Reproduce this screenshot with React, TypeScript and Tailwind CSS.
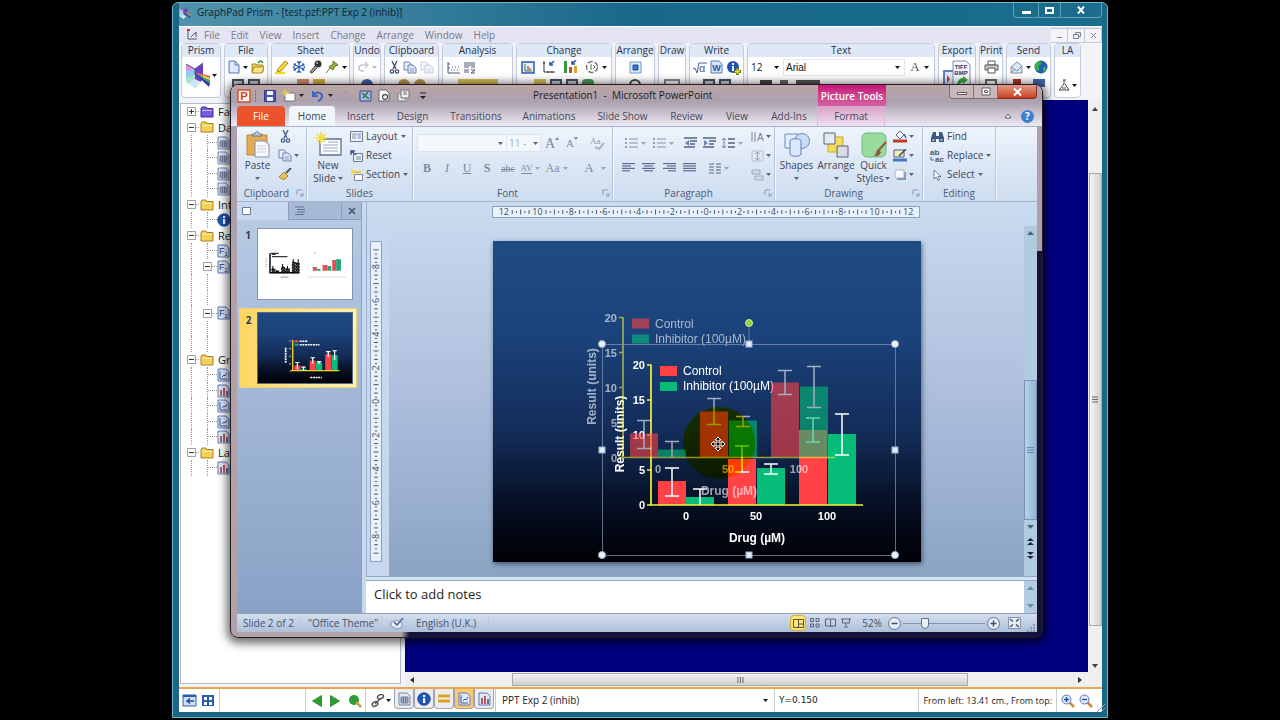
import type { ReactNode } from "react";
import { clsx } from "clsx";

type Bar = { x: number; top: number; series: "control" | "inhibitor"; up: number; down: number };

// Offsets in pixels from the chart origin (where the two axes meet).
const BARS: Bar[] = [
  { x: 7, top: 24, series: "control", up: 37, down: 9 },
  { x: 35, top: 8, series: "inhibitor", up: 16, down: 0 },
  { x: 77, top: 46, series: "control", up: 59, down: 33 },
  { x: 106, top: 37, series: "inhibitor", up: 41, down: 31 },
  { x: 148, top: 75, series: "control", up: 87, down: 63 },
  { x: 177, top: 71, series: "inhibitor", up: 91, down: 50 },
];

const FILL = { control: "#ff4246", inhibitor: "#05bd78" };

const PRISM_MENU = ["File", "Edit", "View", "Insert", "Change", "Arrange", "Window", "Help"];

function Svg({ w, h, children, className }: { w: number; h: number; children: ReactNode; className?: string }) {
  return (
    <svg width={w} height={h} viewBox={`0 0 ${w} ${h}`} fill="none" className={clsx("shrink-0", className)} aria-hidden="true">
      {children}
    </svg>
  );
}

function Caret({ color = "#5b6577" }: { color?: string }) {
  return (
    <Svg w={5} h={3}>
      <path d="M0 0h5L2.5 3z" fill={color} />
    </Svg>
  );
}

function Lines({ rows, color = "#5c6f92" }: { rows: number[][]; color?: string }) {
  return (
    <Svg w={13} h={12}>
      {rows.map(([x, w], i) => (
        <rect key={i} x={x} y={1 + i * 2.4} width={w} height="1.2" fill={color} />
      ))}
    </Svg>
  );
}

/* ---------- Prism icons ---------- */

function PrismLogo({ size }: { size: number }) {
  return (
    <svg width={size} height={size} viewBox="0 0 26 26" aria-hidden="true" className="shrink-0">
      <path d="M1 2l9 5v8L1 17z" fill="#e48fd8" />
      <path d="M1 9l9-2v10l-9 2z" fill="#8fd0f2" />
      <path d="M1 16l9-3v13L1 20z" fill="#a9e3d0" />
      <path d="M10 7l8-6v16l-8 9z" fill="#6a3fc8" />
      <path d="M3 21l7 5 6-6-6-3z" fill="#cfe6f6" />
      <path d="M9 10l16 4v2z" fill="#ef4136" />
      <path d="M9 10l16 6v2z" fill="#f7c52b" />
      <path d="M9 11l16 7v3z" fill="#3fae49" />
      <path d="M9 11l16 10-1 4z" fill="#2c3ea8" />
      <path d="M1 2l9 5 8-6M10 7v6" stroke="#59468f" fill="none" />
    </svg>
  );
}

function PageIcon() {
  return (
    <Svg w={12} h={14}>
      <path d="M1 1h6l4 4v8H1z" fill="#dfe9fa" stroke="#5a76b4" />
      <path d="M7 1v4h4" stroke="#5a76b4" />
    </Svg>
  );
}

function FolderOpen() {
  return (
    <Svg w={14} h={14}>
      <path d="M1 4h4l1 1h6v7H1z" fill="#f0c850" stroke="#a98a1e" />
      <path d="M3 7h10l-2 6H1z" fill="#fbe48b" stroke="#a98a1e" />
      <path d="M7 3c2-3 4-2 5 0" stroke="#3f9b34" strokeWidth="1.6" />
    </Svg>
  );
}

function Folder({ color, edge }: { color: string; edge: string }) {
  return (
    <Svg w={14} h={12}>
      <path d="M1 2.5l1-1.5h4l1 1.5h6V11H1z" fill={color} stroke={edge} />
      <path d="M2 4.5h10" stroke="#fff" opacity=".6" />
    </Svg>
  );
}

function SheetTools() {
  return (
    <>
      <Svg w={14} h={14}>
        <path d="M3 9l7-8 3 2-7 8-4 1z" fill="#f8d838" stroke="#a8841b" />
        <path d="M0 13h10" stroke="#f1d900" strokeWidth="2" />
      </Svg>
      <Svg w={14} h={14}>
        <path d="M7 1v12M1.5 4l11 6M1.5 10l11-6M5 1.5l2 2 2-2M5 12.500l2-2 2 2M1 6.500l2.500-1L3 3M13 7.500l-2.500 1 .5 2.500M1 7.500l2.500 1L3 11M13 6.500l-2.500-1L11 3" stroke="#2c5db5" strokeWidth="1.1" />
      </Svg>
      <Svg w={14} h={14}>
        <circle cx="9" cy="4" r="3.5" fill="#333" />
        <path d="M6 6l-5 6 2 1 5-5" fill="#999" stroke="#444" />
        <circle cx="8" cy="3" r="1" fill="#bbb" />
      </Svg>
      <Svg w={13} h={14}>
        <path d="M7 1l5 4-3 1-2 4-4-3 4-3z" fill="#9db33a" stroke="#5f731a" />
        <path d="M4 8l-4 5" stroke="#666" />
      </Svg>
      <Caret color="#111" />
    </>
  );
}

function CutIcon({ color = "#3c4f78" }: { color?: string }) {
  return (
    <Svg w={11} h={13}>
      <path d="M3 0l4 8M8 0L4 8" stroke={color} strokeWidth="1.4" />
      <circle cx="3" cy="10.5" r="1.7" stroke={color} strokeWidth="1.3" />
      <circle cx="8" cy="10.5" r="1.7" stroke={color} strokeWidth="1.3" />
    </Svg>
  );
}

function CopyIcon({ faded }: { faded?: boolean }) {
  return (
    <Svg w={14} h={13} className={faded ? "opacity-40" : undefined}>
      <path d="M1 1h5l2 2v6H1z" fill="#e8effb" stroke="#6f83b2" />
      <path d="M5 4h5l3 3v5H5z" fill="#dbe6f8" stroke="#6f83b2" />
      <path d="M7 8h4M7 10h4" stroke="#8ea1c8" />
    </Svg>
  );
}

function InfoDot() {
  return (
    <Svg w={14} h={14}>
      <circle cx="7" cy="7" r="6.3" fill="#1f55b5" stroke="#123a86" strokeWidth=".7" />
      <rect x="6" y="6" width="2.2" height="5" fill="#fff" />
      <rect x="6" y="3" width="2.2" height="2" fill="#fff" />
    </Svg>
  );
}

function GridSheet() {
  return (
    <Svg w={13} h={14}>
      <path d="M1 1h8l3 3v9H1z" fill="#e3eaf6" stroke="#7587ad" />
      <path d="M3 5h7v6H3zM3 7h7M3 9h7M5.3 5v6M7.7 5v6" stroke="#4d5e84" strokeWidth=".8" />
    </Svg>
  );
}

function ResultSheet({ n }: { n: number }) {
  return (
    <Svg w={13} h={14}>
      <path d="M1 1h8l3 3v9H1z" fill="#dfe7f5" stroke="#5b78b8" />
      <text x="2" y="10" fontSize="9" fontFamily="Liberation Sans, sans-serif" fill="#22346b">
        F<tspan fontSize="6" dy="2">{n}</tspan>
      </text>
    </Svg>
  );
}

function GraphSheet({ red }: { red?: boolean }) {
  return (
    <Svg w={13} h={14}>
      <path d="M1 1h8l3 3v9H1z" fill="#e3eaf6" stroke="#5b78b8" />
      {red ? (
        <>
          <path d="M4 12V6M7 12V4" stroke="#b6404a" strokeWidth="1.7" />
          <path d="M10 12V7" stroke="#555f70" strokeWidth="1.7" />
        </>
      ) : (
        <path d="M3 3v8h7M5 9l2-2 1 1 2-3" stroke="#3059a8" />
      )}
    </Svg>
  );
}

/* ---------- Prism window ---------- */

function PrismTool({ label, width, children, more }: { label: string; width: string; children?: ReactNode; more?: ReactNode }) {
  return (
    <section className={clsx("flex h-[55px] shrink-0 flex-col overflow-hidden rounded-sm border border-[#c3cad8] bg-white", width)}>
      <h2 className="h-[13px] bg-[#dfe8f6] text-center text-[10px] leading-[12px] whitespace-nowrap text-[#26324f]">{label}</h2>
      <div className="flex h-[20px] items-center justify-center gap-[3px]">{children}</div>
      <div className="flex justify-center gap-1 pt-[2px]">{more}</div>
    </section>
  );
}

function DarkBits() {
  return (
    <>
      <span className="h-3 w-3 border-2 border-[#4b4f5e] bg-[#c9cdd8]" />
      <span className="h-3 w-3 border-2 border-[#4b4f5e] bg-[#c9cdd8]" />
    </>
  );
}

function PrismRibbon() {
  return (
    <div className="flex h-[56px] shrink-0 gap-[3px] bg-[#f3f4f9] pr-[21px] pl-[2px]">
      <section className="flex h-[55px] w-[40px] flex-col rounded-sm border border-[#c3cad8] bg-white">
        <h2 className="h-[13px] bg-[#dfe8f6] text-center text-[10px] leading-[12px] text-[#26324f]">Prism</h2>
        <button type="button" aria-label="Prism menu" className="flex flex-1 items-center justify-center gap-px pb-1">
          <PrismLogo size={26} />
          <Caret color="#111" />
        </button>
      </section>
      <PrismTool label="File" width="w-[44px]" more={<DarkBits />}>
        <PageIcon />
        <Caret color="#111" />
        <FolderOpen />
      </PrismTool>
      <PrismTool label="Sheet" width="w-[79px]" more={<><span className="h-2 w-3 bg-[#d98c6a]" /><span className="h-2 w-3 bg-[#d8b040]" /></>}>
        <SheetTools />
      </PrismTool>
      <PrismTool label="Undo" width="w-[28px]" more={<span className="h-3 w-3 rounded-full bg-[#3c5fa8]" />}>
        <Svg w={12} h={12}>
          <path d="M11 4H5a3 3 0 000 6h2M8 1l3 3-3 3" stroke="#c2c8d2" strokeWidth="1.5" />
        </Svg>
        <Caret color="#b5bac4" />
      </PrismTool>
      <PrismTool label="Clipboard" width="w-[55px]" more={<><span className="h-3 w-3 rounded-full bg-[#b9924c]" /><span className="h-3 w-3 rounded-full bg-[#b9924c]" /></>}>
        <CutIcon />
        <CopyIcon />
        <CopyIcon faded />
      </PrismTool>
      <PrismTool label="Analysis" width="w-[71px]" more={<span className="h-2 w-10 bg-[#d8c25a]" />}>
        <div className="flex w-full gap-[3px] pl-1">
          <Svg w={13} h={13}>
            <path d="M1 1v11h12M1 3h2M1 7h2" stroke="#4b5875" />
            <path d="M4 9h8M5 6h7" stroke="#4b5875" strokeDasharray="1 2" />
          </Svg>
          <Svg w={13} h={13}>
            <path d="M1 2h11M1 4h11M1 6h5M8 6h4M1 9h5M1 11h5M8 9h4l-4 3h4" stroke="#4b5875" />
          </Svg>
        </div>
      </PrismTool>
      <PrismTool label="Change" width="w-[96px]" more={<><span className="h-2 w-3 bg-[#d8c25a]" /><DarkBits /><span className="h-2 w-3 rounded-full bg-[#4d9c4f]" /></>}>
        <div className="flex items-center gap-[7px]">
          <Svg w={14} h={13}>
            <path d="M1 1h12v11H1z" fill="#e6f0fc" stroke="#2956b3" strokeWidth="1.5" />
            <path d="M4 3v7h7" stroke="#356f35" />
            <path d="M7 9V5M9 9V7" stroke="#b23c2c" strokeWidth="1.2" />
          </Svg>
          <Svg w={14} h={14}>
            <path d="M2 1v11h11M1 3h2M6 11v2M10 11v2" stroke="#333" />
            <path d="M12 1L8 5M8 2v3h3" stroke="#3156ae" strokeWidth="1.6" />
          </Svg>
          <Svg w={15} h={14}>
            <path d="M1 1h3v12H1z" fill="#2f9b40" />
            <path d="M6 7h3v6H6z" fill="#cf4538" />
            <path d="M11 6h3v7h-3z" fill="#d9a537" />
            <path d="M13 0L9 4M9 1v3h3" stroke="#3156ae" strokeWidth="1.6" />
          </Svg>
          <Svg w={14} h={14}>
            <circle cx="7" cy="7" r="5.5" stroke="#6b7585" strokeWidth="1.5" strokeDasharray="5 2" />
            <path d="M6 4v6M8 5l2 2-2 2" stroke="#557a3b" />
          </Svg>
        </div>
        <Caret color="#111" />
      </PrismTool>
      <PrismTool label="Arrange" width="w-[40px]" more={<span className="h-3 w-3 rounded-full border-2 border-[#444]" />}>
        <Svg w={13} h={13}>
          <path d="M1 1h11v11H1z" fill="#dcebfb" stroke="#6b99d8" />
          <path d="M4 4h5v5H4z" fill="#3d7bc8" stroke="#1d4d92" />
        </Svg>
      </PrismTool>
      <PrismTool label="Draw" width="w-[28px]" more={<span className="h-3 w-4 border-2 border-[#888]" />} />
      <PrismTool label="Write" width="w-[55px]" more={<DarkBits />}>
        <Svg w={14} h={13}>
          <path d="M0 8l2-1 2 5L6 2h8" stroke="#4a5f96" />
          <text x="6" y="11" fontSize="11" fontFamily="Liberation Sans, sans-serif" fill="#4a5f96">α</text>
        </Svg>
        <Svg w={13} h={14}>
          <path d="M1 1h8l3 3v9H1z" fill="#d8e4f8" stroke="#5b78b8" />
          <text x="6.500" y="11" fontSize="9" fontWeight="700" textAnchor="middle" fontFamily="Liberation Sans, sans-serif" fill="#2c50a8">W</text>
        </Svg>
        <Svg w={15} h={15}>
          <circle cx="7" cy="7" r="6" fill="#1f55b5" />
          <path d="M6 6h2v5H6zM6 3h2v2H6z" fill="#fff" />
          <path d="M11.500 8v7M8 11.500h7" stroke="#6a7a1c" strokeWidth="3" />
          <path d="M11.500 9v5M9 11.500h5" stroke="#e3e22c" strokeWidth="1.500" />
        </Svg>
      </PrismTool>
      <section className="flex h-[55px] min-w-0 flex-1 flex-col overflow-hidden rounded-sm border border-[#c3cad8] bg-white">
        <h2 className="h-[13px] bg-[#dfe8f6] text-center text-[10px] leading-[12px] text-[#26324f]">Text</h2>
        <div className="flex h-[20px] items-center text-[10px] text-[#111]">
          <label className="relative flex w-[35px] items-center">
            <select aria-label="Font size" className="w-full appearance-none bg-transparent pl-[3px]" defaultValue="12">
              <option>12</option>
            </select>
            <span className="absolute right-1"><Caret color="#111" /></span>
          </label>
          <label className="relative flex flex-1 items-center border border-[#e3e6ee]">
            <select aria-label="Font family" className="w-full appearance-none bg-transparent pl-[2px] font-['Liberation_Sans',sans-serif]" defaultValue="Arial">
              <option>Arial</option>
            </select>
            <span className="absolute right-1"><Caret color="#111" /></span>
          </label>
          <button type="button" className="flex w-[29px] items-center justify-center gap-1 font-['Liberation_Serif',serif] text-[13px] leading-4 text-[#555]">
            A
            <Caret color="#111" />
          </button>
        </div>
        <div className="flex gap-2 pt-[3px] pl-3">
          <span className="h-2 w-3 bg-[#444]" />
          <span className="h-2 w-2 bg-[#666]" />
          <span className="h-2 w-6 bg-[#555]" />
        </div>
      </section>
      <section className="flex h-[55px] w-[38px] shrink-0 flex-col items-center overflow-hidden rounded-sm border border-[#c3cad8] bg-white">
        <h2 className="h-[13px] w-full bg-[#dfe8f6] text-center text-[10px] leading-[12px] text-[#26324f]">Export</h2>
        <Svg w={28} h={30}>
          <path d="M1 14h12v14H1z" fill="#dfe8fa" stroke="#3c57a8" strokeWidth="1.5" />
          <path d="M4 18l3 4-3 4z" fill="#c33" />
          <path d="M10 4h13l4 4v21H10z" fill="#f4f7fd" stroke="#7c8cae" />
          <g fontSize="6" fontWeight="700" fontFamily="Liberation Sans, sans-serif" textAnchor="middle" fill="#26356b">
            <text x="18" y="12">TIFF</text>
            <text x="18" y="18">BMP</text>
          </g>
          <path d="M14 28c1-7 5-7 6-7v-2l5 4-5 4v-2z" fill="#3aa33c" />
        </Svg>
      </section>
      <PrismTool label="Print" width="w-[24px]" more={<span className="h-2 w-3 border-2 border-[#666]" />}>
        <Svg w={15} h={14}>
          <path d="M4 1h7v4H4z" fill="#fff" stroke="#555" />
          <path d="M1 5h13v5H1z" fill="#c9cbd0" stroke="#555" />
          <path d="M4 8h7v5H4z" fill="#fff" stroke="#555" />
        </Svg>
      </PrismTool>
      <PrismTool label="Send" width="w-[45px]" more={<><span className="h-2 w-2 bg-[#a33]" /><span className="ml-2 h-2 w-3 bg-[#46a]" /></>}>
        <Svg w={13} h={13}>
          <path d="M1 6l6-5 5 4v7H1z" fill="#dce7f4" stroke="#7d90ac" />
          <path d="M1 6l6 4 5-5M1 12l4-4" stroke="#7d90ac" />
        </Svg>
        <Caret color="#111" />
        <Svg w={14} h={14}>
          <circle cx="7" cy="7" r="6.5" fill="#1f5fb4" />
          <path d="M3 2c3-2 5 0 4 2s-3 2-2 4-1 4-3 2-1-7 1-8zM9 7c2-1 4 0 3 3s-3 2-3 0z" fill="#3eae49" />
        </Svg>
      </PrismTool>
      <section className="flex h-[55px] w-[27px] shrink-0 flex-col rounded-sm border border-[#c3cad8] bg-white">
        <h2 className="h-[13px] bg-[#dfe8f6] text-center text-[10px] leading-[12px] text-[#26324f]">LA</h2>
        <button type="button" aria-label="LabArchives" className="mt-[22px] flex items-center justify-center gap-[2px]">
          <Svg w={12} h={12}>
            <path d="M5 1h3M6 1v4L1 11h10L7 5" stroke="#444" />
            <path d="M4 9h4" stroke="#444" />
          </Svg>
          <Caret color="#111" />
        </button>
      </section>
    </div>
  );
}

type TreeRow = { kind: "folder" | "leaf" | "branch" | "gap"; label?: string; icon?: ReactNode };

const yellow = <Folder color="#f6cf55" edge="#a8802a" />;

const TREE: TreeRow[] = [
  { kind: "folder", label: "Fa", icon: <Folder color="#7b5be0" edge="#3d278f" /> },
  { kind: "folder", label: "Da", icon: yellow },
  { kind: "leaf", icon: <GridSheet /> },
  { kind: "leaf", icon: <GridSheet /> },
  { kind: "leaf", icon: <GridSheet /> },
  { kind: "leaf", icon: <GridSheet /> },
  { kind: "folder", label: "Inf", icon: yellow },
  { kind: "leaf", icon: <InfoDot /> },
  { kind: "folder", label: "Re", icon: yellow },
  { kind: "leaf", icon: <ResultSheet n={1} /> },
  { kind: "branch", icon: <ResultSheet n={2} /> },
  { kind: "gap" },
  { kind: "gap" },
  { kind: "branch", icon: <ResultSheet n={2} /> },
  { kind: "gap" },
  { kind: "gap" },
  { kind: "folder", label: "Gr", icon: yellow },
  { kind: "leaf", icon: <GraphSheet /> },
  { kind: "leaf", icon: <GraphSheet red /> },
  { kind: "leaf", icon: <GraphSheet /> },
  { kind: "leaf", icon: <GraphSheet /> },
  { kind: "leaf", icon: <GraphSheet red /> },
  { kind: "folder", label: "La", icon: yellow },
  { kind: "leaf", icon: <GraphSheet red /> },
];

function Expander({ open }: { open: boolean }) {
  return (
    <Svg w={9} h={9}>
      <path d="M.5.5h8v8h-8z" fill="#fff" stroke="#9aa1ae" />
      <path d={open ? "M2 4.5h5" : "M2 4.5h5M4.5 2v5"} stroke="#333" />
    </Svg>
  );
}

function Tree() {
  return (
    <ul className="pl-[6px]">
      {TREE.map((row, i) => (
        <li key={i} className="flex items-center text-[11px] leading-none text-[#222] odd:h-[15px] even:h-4">
          {row.kind === "folder" && (
            <>
              <Expander open={i > 0} />
              <span className="mr-px w-[3px] border-t border-dotted border-[#999]" />
              {row.icon}
              <span className="pl-[4px]">{row.label}</span>
            </>
          )}
          {row.kind === "leaf" && (
            <>
              <span className="ml-1 h-full w-4 border-l border-dotted border-[#999]" />
              <span className="h-full w-[10px] border-l border-dotted border-[#999]">
                <span className="block h-1/2 border-b border-dotted border-[#999]" />
              </span>
              {row.icon}
            </>
          )}
          {row.kind === "branch" && (
            <>
              <span className="ml-1 h-full w-3 border-l border-dotted border-[#999]" />
              <Expander open />
              <span className="w-[5px] border-t border-dotted border-[#999]" />
              {row.icon}
            </>
          )}
          {row.kind === "gap" && (
            <>
              <span className="ml-1 h-full w-4 border-l border-dotted border-[#999]" />
              <span className="h-full w-4 border-l border-dotted border-[#999]" />
            </>
          )}
        </li>
      ))}
    </ul>
  );
}

function PrismStatus() {
  return (
    <footer className="flex h-[25px] shrink-0 items-center border-t-2 border-[#e9a850] bg-white text-[10px] text-[#222]">
      <div className="flex h-full w-[41px] items-center gap-1 border-r border-[#c8ccd4] pl-[3px]">
        <Svg w={15} h={13}>
          <path d="M1 1h13v11H1z" fill="#cfe0f8" stroke="#2a5ea8" />
          <path d="M1 2h13" stroke="#2a5ea8" strokeWidth="2" />
          <path d="M5 7h7M8 4.500L5 7l3 2.500" stroke="#1d4f9b" strokeWidth="1.5" />
        </Svg>
        <Svg w={14} h={13}>
          <path d="M1 1h12v11H1z" fill="#2a5ea8" />
          <path d="M3 3h3v3H3zM8 3h3v3H8zM3 8h3v3H3zM8 8h3v3H8z" fill="#fff" />
        </Svg>
      </div>
      <div className="h-full w-[86px] border-r border-[#c8ccd4]" />
      <div className="flex h-full w-[60px] items-center gap-2 border-r border-[#c8ccd4] pl-[6px]">
        <button type="button" aria-label="Previous sheet">
          <Svg w={10} h={12}><path d="M9.5.5v11L.5 6z" fill="#2ea02e" stroke="#17701a" strokeWidth=".7" /></Svg>
        </button>
        <button type="button" aria-label="Next sheet">
          <Svg w={10} h={12}><path d="M.5.5v11L9.5 6z" fill="#2ea02e" stroke="#17701a" strokeWidth=".7" /></Svg>
        </button>
        <button type="button" aria-label="Find sheet">
          <Svg w={14} h={14}>
            <circle cx="6" cy="6" r="5" fill="#2f9d2f" />
            <path d="M8 8l5 5" stroke="#c0a040" strokeWidth="2.5" />
          </Svg>
        </button>
      </div>
      <div className="flex h-full w-[27px] items-center gap-px pl-[5px]">
        <Svg w={14} h={14}>
          <rect x="6.5" y="1" width="6" height="4" rx="2" transform="rotate(-25 9 3)" stroke="#555" strokeWidth="1.5" />
          <rect x="1" y="8" width="6" height="4" rx="2" transform="rotate(-25 4 10)" stroke="#555" strokeWidth="1.5" />
          <path d="M4 10l6-6" stroke="#555" strokeWidth="1.4" />
        </Svg>
        <Caret color="#111" />
      </div>
      <div className="mx-px flex h-full items-start">
        {[<GridSheet key="g" />, <InfoDot key="i" />, null, <GraphSheet key="c" />, <GraphSheet key="l" red />].map((icon, i) => (
          <button
            type="button"
            key={i}
            aria-label={["Data", "Info", "Results", "Graphs", "Layouts"][i]}
            className={clsx(
              "flex h-5 w-5 items-center justify-center rounded-b border border-t-0 border-[#9da3b0]",
              i === 3 ? "bg-[#fbc873]" : "bg-[#ececf2]",
            )}
          >
            {icon ?? <Svg w={12} h={10}><path d="M0 2h12M0 7h12" stroke="#d9a520" strokeWidth="3" /></Svg>}
          </button>
        ))}
      </div>
      <label className="relative flex h-full w-[280px] items-center border-x border-[#c8ccd4]">
        <select aria-label="Sheet" className="w-full appearance-none bg-transparent pl-[6px]" defaultValue="PPT Exp 2 (inhib)">
          <option>PPT Exp 2 (inhib)</option>
        </select>
        <span className="absolute right-[6px]"><Caret color="#111" /></span>
      </label>
      <p className="flex-1 pl-[4px] font-['DejaVu_Sans',sans-serif] text-[9px]">Y=0.150</p>
      <p className="flex h-full items-center border-x border-[#c8ccd4] px-1 text-[9px] whitespace-nowrap">From left: 13.41 cm., From top:</p>
      <div className="flex h-full w-[45px] items-center gap-1 pl-1">
        {["M3 5.5h5M5.5 3v5", "M3 5.5h5"].map((d) => (
          <Svg w={14} h={14} key={d}>
            <path d="M8 8l5 5" stroke="#c98b3a" strokeWidth="2.5" />
            <circle cx="5.5" cy="5.5" r="4.5" fill="#dfeafa" stroke="#5a7cb8" />
            <path d={d} stroke="#234c9c" strokeWidth="1.3" />
          </Svg>
        ))}
        <Svg w={8} h={10} className="self-end"><path d="M0 10l8-8M4 10l4-4" stroke="#9aa6b8" /></Svg>
      </div>
    </footer>
  );
}

/* ---------- PowerPoint ribbon ---------- */

function Group({ label, width, launcher, children }: { label: string; width: string; launcher?: boolean; children: ReactNode }) {
  return (
    <section className={clsx("flex flex-col border-r border-[#b3c3d9] shadow-[1px_0_0_#f4f8fd]", width)}>
      <div className="flex h-[58px]">{children}</div>
      <div className="flex h-[15px] items-center">
        <h2 className="flex-1 text-center text-[10px] leading-none text-[#4d5b74]">{label}</h2>
        {launcher && <Svg w={10} h={8}><path d="M1 6V1h5M4 4l3 3M7 4v3H4" stroke="#8f9db5" /></Svg>}
      </div>
    </section>
  );
}

function BigButton({ icon, top, bottom, width }: { icon: ReactNode; top: string; bottom?: string; width: string }) {
  return (
    <button type="button" className={clsx("flex flex-col items-center pt-[3px] text-[10px] leading-[13px] text-[#3b4558]", width)}>
      <span className="flex h-[29px] items-center">{icon}</span>
      <span className="whitespace-nowrap">{top}</span>
      <span className="flex h-[13px] items-center gap-[2px] whitespace-nowrap">
        {bottom}
        <Caret />
      </span>
    </button>
  );
}

function RowButton({ icon, label, caret }: { icon: ReactNode; label?: string; caret?: boolean }) {
  return (
    <button
      type="button"
      aria-label={label ?? "Option"}
      className={clsx("flex h-[19px] items-center text-[10px] whitespace-nowrap text-[#3b4558]", label ? "gap-[3px]" : "gap-[2px]")}
    >
      <span className="flex w-[14px] justify-center">{icon}</span>
      {label}
      {caret && <Caret />}
    </button>
  );
}

function Slot({ width = "w-[20px]", children }: { width?: string; children: ReactNode }) {
  return (
    <button type="button" className={clsx("flex h-[18px] items-center justify-center gap-[3px] font-['Liberation_Serif',serif] text-[#7d889c]", width)}>
      {children}
    </button>
  );
}

function Sep() {
  return <span className="h-[14px] w-px bg-[#bccbdf]" />;
}

function Ribbon() {
  return (
    <div className="flex h-[76px] shrink-0 border-y border-[#a5b4cb] bg-linear-to-b from-[#eef4fc] via-[#dce7f5] to-[#cddcf0]">
      <Group label="Clipboard" width="w-[70px]" launcher>
        <BigButton
          width="w-[41px]"
          top="Paste"
          icon={
            <Svg w={24} h={27}>
              <path d="M1 4h20v20H1z" fill="#e3ac55" stroke="#c0872f" />
              <path d="M6 5V3h3c0-3 4-3 4 0h3v2z" fill="#c9ccd3" stroke="#6d7482" />
              <path d="M9 10h10l4 4v12H9z" fill="#f7faff" stroke="#8190ad" />
              <path d="M11 15h9M11 18h9M11 21h9" stroke="#c0cbe0" />
            </Svg>
          }
        />
        <div className="flex flex-col">
          <RowButton icon={<CutIcon color="#48608f" />} />
          <RowButton icon={<CopyIcon />} caret />
          <RowButton
            icon={
              <Svg w={14} h={13}>
                <path d="M13 0L8 5" stroke="#555" strokeWidth="2" />
                <path d="M6 4l4 4-4 4-5-3z" fill="#e8c15a" stroke="#b08826" />
              </Svg>
            }
          />
        </div>
      </Group>
      <Group label="Slides" width="w-[106px]">
        <BigButton
          width="w-[42px]"
          top="New"
          bottom="Slide"
          icon={
            <Svg w={27} h={26}>
              <path d="M5 7h21v16H5z" fill="#fbfcff" stroke="#5f6f8d" strokeWidth="1.3" />
              <path d="M8 13h15M8 16h15M8 19h15M13 10h10" stroke="#9fabc2" />
              <path d="M6 0v12M0 6h12M2 2l8 8M10 2l-8 8" stroke="#f5dd3c" strokeWidth="1.7" />
            </Svg>
          }
        />
        <div className="flex flex-col">
          <RowButton
            label="Layout"
            caret
            icon={
              <Svg w={13} h={11}>
                <path d="M.5.5h12v10H.5z" fill="#f3f6fc" stroke="#6c7a94" />
                <path d="M2 3h9M2 5h4M2 7h4M7.5 5H11M7.5 7H11" stroke="#7f8ca5" />
              </Svg>
            }
          />
          <RowButton
            label="Reset"
            icon={
              <Svg w={13} h={12}>
                <path d="M3.5 3.5h9v8h-9z" fill="#e8eefa" stroke="#6c7a94" />
                <path d="M1 5V1h4M1 1l5 4" stroke="#3d4f9c" strokeWidth="1.4" />
                <path d="M6 7h5M6 9h5" stroke="#7f8ca5" />
              </Svg>
            }
          />
          <RowButton
            label="Section"
            caret
            icon={
              <Svg w={13} h={12}>
                <path d="M4.5 5.5h8v6h-8z" fill="#f8faff" stroke="#7a879f" />
                <path d="M2 3h9" stroke="#eec83c" strokeWidth="2" />
                <path d="M2 0v6" stroke="#f3d94f" strokeWidth="1.5" />
              </Svg>
            }
          />
        </div>
      </Group>
      <Group label="Font" width="w-[200px]" launcher>
        <div className="flex flex-col gap-[7px] pt-[7px] pl-1">
          <div className="flex h-[18px] items-center">
            <label className="relative flex h-full w-[90px] items-center border border-[#dbe4f1] bg-[#f4f8fd]">
              <select aria-label="Font" className="h-full w-full appearance-none text-[10px]" />
              <span className="absolute right-[3px]"><Caret /></span>
            </label>
            <label className="relative flex h-full w-[34px] items-center border border-l-0 border-[#dbe4f1] bg-[#f4f8fd]">
              <select aria-label="Font size" defaultValue="11 -" className="h-full w-full appearance-none pl-[2px] text-[10px] text-[#a2abba]">
                <option>11 -</option>
              </select>
              <span className="absolute right-[2px]"><Caret /></span>
            </label>
            <Slot width="w-[22px]"><span className="text-[14px]">A</span><Svg w={4} h={12} className="-ml-[3px]"><path d="M0 3l2-3 2 3z" fill="#7d889c" /></Svg></Slot>
            <Slot width="w-[18px]"><span className="text-[11px]">A</span><Svg w={4} h={12} className="-ml-[3px]"><path d="M0 0h4L2 3z" fill="#7d889c" /></Svg></Slot>
            <span className="px-[3px]"><Sep /></span>
            <Slot>
              <Svg w={15} h={14}>
                <text x="0" y="8" fontSize="9" fontFamily="Liberation Serif, serif" fill="#8d98ab">Aa</text>
                <path d="M5 11l4 2 5-6" stroke="#a9b3c6" strokeWidth="2" />
              </Svg>
            </Slot>
          </div>
          <div className="flex h-[18px] items-center text-[12px]">
            <Slot><b>B</b></Slot>
            <Slot><i>I</i></Slot>
            <Slot><u>U</u></Slot>
            <Slot><b>S</b></Slot>
            <Slot width="w-[22px]"><s className="text-[10px]">abc</s></Slot>
            <Slot width="w-[23px]">
              <span className="border-b border-[#7d889c] text-[9px] leading-[10px]">AV</span>
              <Caret color="#9aa5b8" />
            </Slot>
            <Slot width="w-[29px]">Aa<Caret color="#9aa5b8" /></Slot>
            <span className="px-[4px]"><Sep /></span>
            <Slot width="w-[32px]"><span className="text-[13px]">A</span><span className="pl-1"><Caret color="#9aa5b8" /></span></Slot>
          </div>
        </div>
      </Group>
      <Group label="Paragraph" width="w-[162px]" launcher>
        <div className="flex w-[137px] flex-col gap-[7px] pt-[7px] pl-2">
          <div className="flex h-[18px] items-center">
            {[0, 1].map((i) => (
              <Slot key={i} width="w-[28px]">
                <Svg w={13} h={12}>
                  <path d="M4 2h9M4 6h9M4 10h9" stroke="#8592aa" />
                  <path d={i ? "M1 1v2M1 5v2M1 9v2" : "M0 2h2M0 6h2M0 10h2"} stroke="#6d83b5" strokeWidth="1.5" />
                </Svg>
                <Caret color="#9aa5b8" />
              </Slot>
            ))}
            <span className="px-[2px]"><Sep /></span>
            {["M1 6l4-3v6z", "M5 6L1 3v6z"].map((d) => (
              <Slot key={d} width="w-[19px]">
                <Svg w={13} h={12}>
                  <path d="M0 1h13M6 4h7M6 7h5M0 10h11" stroke="#56647f" strokeWidth="1.3" />
                  <path d={d} fill="#6d83b5" />
                </Svg>
              </Slot>
            ))}
            <Slot width="w-[27px]">
              <Svg w={13} h={12}>
                <path d="M2 1v10M0 3l2-2 2 2M0 9l2 2 2-2" stroke="#6d83b5" />
                <path d="M6 2h7M6 6h7M6 10h7" stroke="#56647f" strokeWidth="1.3" />
              </Svg>
              <Caret color="#9aa5b8" />
            </Slot>
          </div>
          <div className="flex h-[18px] items-center">
            <Slot width="w-[14px]"><Lines rows={[[0, 13], [0, 9], [0, 13], [0, 8]]} /></Slot>
            <Slot width="w-[26px]"><Lines rows={[[0, 13], [2, 9], [0, 13], [2, 9]]} /></Slot>
            <Slot width="w-[16px]"><Lines rows={[[0, 13], [4, 9], [0, 13], [5, 8]]} /></Slot>
            <Slot width="w-[24px]"><Lines rows={[[0, 13], [0, 13], [0, 13], [0, 13]]} /></Slot>
            <span className="pr-[2px] pl-[2px]"><Sep /></span>
            <Slot width="w-[28px]">
              <Svg w={12} h={12}><path d="M0 2h5M7 2h5M0 5h5M7 5h5M0 8h5M7 8h5M0 11h5M7 11h5" stroke="#56647f" /></Svg>
              <Caret color="#9aa5b8" />
            </Slot>
          </div>
        </div>
        <div className="flex flex-col">
          <RowButton
            caret
            icon={
              <Svg w={13} h={12}>
                <path d="M1 1v10M4 1v10" stroke="#77849c" />
                <text x="6" y="10" fontSize="10" fontFamily="Liberation Sans, sans-serif" fill="#77849c">A</text>
              </Svg>
            }
          />
          <RowButton icon={<Svg w={13} h={12}><path d="M1 1h11v10H1z" stroke="#b6c0d0" /><path d="M6.5 2v8M4 4l2.500-2L9 4M4 8l2.500 2L9 8" stroke="#98a4b8" /></Svg>} caret />
          <RowButton icon={<Svg w={13} h={12}><path d="M1 1h8v4H1zM4 7h8v4H4z" fill="#d3dae6" stroke="#a0abbd" /></Svg>} caret />
        </div>
      </Group>
      <Group label="Drawing" width="w-[148px]" launcher>
        <BigButton
          width="w-[43px]"
          top="Shapes"
          icon={
            <Svg w={26} h={26}>
              <path d="M1 2h13v14H1z" fill="#e4eefb" stroke="#6b8cc0" />
              <circle cx="18" cy="9" r="7.5" fill="#c9dcf5" stroke="#6b8cc0" />
              <path d="M6 9c0-3 11-3 11 0v13c0 3-11 3-11 0z" fill="#dbe8fa" stroke="#5d80b8" />
            </Svg>
          }
        />
        <BigButton
          width="w-[36px]"
          top="Arrange"
          icon={
            <Svg w={26} h={26}>
              <path d="M5 5h15v15H5z" fill="#f5dc5c" stroke="#c9a52b" />
              <path d="M1 1h11v11H1z" fill="#e8ecf2" stroke="#5a6474" />
              <path d="M14 14h11v11H14z" fill="#d6dbe5" stroke="#5a6474" />
            </Svg>
          }
        />
        <BigButton
          width="w-[39px]"
          top="Quick"
          bottom="Styles"
          icon={
            <Svg w={26} h={26}>
              <rect x="1" y="1" width="24" height="24" rx="5" fill="#9adb9f" stroke="#6cb873" />
              <path d="M25 10l-8 9" stroke="#8b6844" strokeWidth="2.5" />
              <path d="M17 17l3 3c-1 4-5 5-7 4 2-1 2-5 4-7z" fill="#94573c" />
            </Svg>
          }
        />
        <div className="flex flex-col">
          <RowButton icon={<Svg w={14} h={13}><path d="M3 5l4-4 4 4-4 4z" fill="#eef2fa" stroke="#5c6c90" /><path d="M11 4l2 4" stroke="#3c5cae" strokeWidth="1.5" /><path d="M0 11h14" stroke="#c0392b" strokeWidth="3" /></Svg>} caret />
          <RowButton icon={<Svg w={14} h={13}><path d="M1 1h10v7H1z" fill="#f2efc2" stroke="#555f70" /><path d="M13 0L6 7" stroke="#444" strokeWidth="1.5" /><path d="M0 11h14" stroke="#4477c0" strokeWidth="3" /></Svg>} caret />
          <RowButton icon={<Svg w={12} h={11}><path d="M3 3h9v8H3z" fill="#8b93a4" /><rect x="1" y="1" width="9" height="8" rx="1" fill="#f7f9fd" stroke="#a9b2c4" /></Svg>} caret />
        </div>
      </Group>
      <Group label="Editing" width="w-[73px]">
        <div className="flex flex-col pl-[7px]">
          <RowButton
            label="Find"
            icon={
              <Svg w={13} h={12}>
                <path d="M2 1h3v4h3V1h3l2 6v4H8V8H5v3H0V7z" fill="#3e5582" />
                <path d="M1.5 8h2v2h-2zM9.5 8h2v2h-2z" fill="#aebfe0" />
              </Svg>
            }
          />
          <RowButton
            label="Replace"
            caret
            icon={
              <Svg w={14} h={14}>
                <g fontSize="8" fontWeight="700" fontFamily="Liberation Sans, sans-serif" fill="#4a5670">
                  <text x="0" y="6">ab</text>
                  <text x="5" y="13">ac</text>
                </g>
                <path d="M1 8v3h3" stroke="#3d63b8" />
              </Svg>
            }
          />
          <RowButton label="Select" caret icon={<Svg w={9} h={12}><path d="M1 1v9l2.300-2 1.700 3.500 1.500-.8L5 7.500h3z" fill="#fff" stroke="#707c92" /></Svg>} />
        </div>
      </Group>
    </div>
  );
}

/* ---------- Chart and slide ---------- */

function ErrorBar({ bar, stroke }: { bar: Bar; stroke: string }) {
  const cx = bar.x + 14;
  return (
    <path
      d={`M${cx - 7} ${-bar.up}h14M${cx} ${-bar.up}V${-bar.down}${bar.down ? `M${cx - 7} ${-bar.down}h14` : ""}`}
      stroke={stroke}
      strokeWidth="1.5"
    />
  );
}

function Plot() {
  return (
    <>
      {BARS.map((bar) => (
        <g key={bar.x}>
          <rect x={bar.x} y={-bar.top} width="28" height={bar.top} fill={FILL[bar.series]} />
          <ErrorBar bar={bar} stroke="#fff" />
        </g>
      ))}
      <path d="M0-140.500V.700M-4 0h216M-4-35h4M-4-70h4M-4-105h4M-4-140h4" stroke="#f4f436" strokeWidth="1.7" />
      <rect x="9" y="-139" width="17" height="10" fill={FILL.control} />
      <rect x="9" y="-123" width="17" height="9" fill={FILL.inhibitor} />
    </>
  );
}

function Chart({ x, y, ghost }: { x: number; y: number; ghost?: boolean }) {
  return (
    <g transform={`translate(${x} ${y})`} opacity={ghost ? 0.6 : 1} fill="#fff" fontFamily="Liberation Sans, Arial, sans-serif">
      <Plot />
      <g fontSize="11" fontWeight="700">
        {[0, 5, 10, 15, 20].map((v) => (
          <text key={v} x="-6" y={4 - v * 7} textAnchor="end">{v}</text>
        ))}
        <text x="35" y="15" textAnchor="middle">0</text>
        <text x="105" y="15" textAnchor="middle">50</text>
        <text x="176" y="15" textAnchor="middle">100</text>
      </g>
      <text x="32" y="-130" fontSize="12">Control</text>
      <text x="32" y="-115" fontSize="12">Inhibitor (100µM)</text>
      <text x="106" y="37" fontSize="12" fontWeight="700" textAnchor="middle">Drug (µM)</text>
      <text transform="translate(-27 -71) rotate(-90)" fontSize="12" fontWeight="700" textAnchor="middle">Result (units)</text>
    </g>
  );
}

function Slide() {
  return (
    <svg width="428" height="321" viewBox="0 0 428 321" fill="none" className="isolate shrink-0 shadow-[1px_2px_5px_rgba(20,30,50,0.6)]">
      <defs>
        <linearGradient id="slideBg" x1="0" y1="0" x2="0" y2="1">
          <stop offset="0" stopColor="#1f4c83" />
          <stop offset=".3" stopColor="#1b427a" />
          <stop offset=".6" stopColor="#132c58" />
          <stop offset=".85" stopColor="#050c1e" />
          <stop offset="1" stopColor="#000004" />
        </linearGradient>
      </defs>
      <rect width="428" height="321" fill="url(#slideBg)" />
      <Chart x={158} y={264} />
      <Chart x={130} y={216.5} ghost />
      <circle cx="226" cy="202" r="36" fill="#ffe800" style={{ mixBlendMode: "multiply" }} />
      <path d="M109.500 103.500h293v211h-293zM256 103V86" stroke="#8392ae" strokeOpacity=".75" />
      {[[109, 103], [402, 103], [109, 314], [402, 314]].map(([cx, cy]) => (
        <circle key={`${cx}-${cy}`} cx={cx} cy={cy} r="3.6" fill="#e9f3fb" stroke="#8fa3c0" />
      ))}
      {[[256, 103], [256, 314], [109, 209], [402, 209]].map(([cx, cy]) => (
        <rect key={`${cx}-${cy}`} x={cx - 3} y={cy - 3} width="6" height="6" fill="#dcecfb" stroke="#9fb2cc" />
      ))}
      <circle cx="256" cy="82" r="3.5" fill="#8fd43a" stroke="#cdeaa0" />
      <g transform="translate(225 203)">
        <path d="M0-7l3 3h-2v3h3v-2l3 3-3 3v-2h-3v3h2l-3 3-3-3h2v-3h-3v2l-3-3 3-3v2h3v-3h-2z" fill="#111" stroke="#fff" />
      </g>
    </svg>
  );
}

// Quarter-unit marks, leaving room for the number at every second unit.
function rulerTicks(units: number) {
  const ticks: { at: number; size: number }[] = [];
  for (let q = -units * 4; q <= units * 4; q++) {
    const unit = Math.round(q / 8) * 2;
    const room = Math.abs(unit) >= 10 ? 2 : 1;
    if (Math.abs(q - unit * 4) < room) continue;
    ticks.push({ at: (q / 4) * 16.85, size: q % 4 === 0 ? 5 : q % 2 === 0 ? 4 : 2 });
  }
  return ticks;
}

function Ruler({ vertical }: { vertical?: boolean }) {
  const length = vertical ? 321 : 428;
  const limit = vertical ? 9 : 12;
  const labels = vertical ? [-8, -6, -4, -2, 0, 2, 4, 6, 8] : [-12, -10, -8, -6, -4, -2, 0, 2, 4, 6, 8, 10, 12];
  return (
    <svg
      width={vertical ? 12 : length}
      height={vertical ? length : 12}
      viewBox={vertical ? `0 0 12 ${length}` : `0 0 ${length} 12`}
      className="shrink-0"
      aria-hidden="true"
    >
      <g transform={vertical ? `translate(0 ${length}) rotate(-90)` : undefined}>
        <rect x=".5" y=".5" width={length - 1} height="11" fill="#e8f1fb" stroke="#8ba0c0" />
        <g transform={`translate(${length / 2} 6)`}>
          {rulerTicks(limit).map((t) => (
            <rect key={t.at} x={t.at - 0.5} y={-t.size / 2} width="1" height={t.size} fill="#4c5a74" />
          ))}
          {labels.map((n) => (
            <text key={n} x={n * 16.85} y="3" fontSize="9" textAnchor="middle" fill="#3f4b62">
              {Math.abs(n)}
            </text>
          ))}
        </g>
      </g>
    </svg>
  );
}

function ThumbOne() {
  return (
    <svg width="96" height="72" viewBox="0 0 96 72" fill="none" className="border border-[#8093b3] bg-white" aria-hidden="true">
      <path d="M12 25v20h30" stroke="#000" strokeWidth="1.5" />
      <path d="M14 26h4M14 28.500h16M13 25h8" stroke="#000" />
      <path d="M8 30v10" stroke="#888" strokeDasharray="1 1" />
      <path d="M14 41h3v4h-3zM18 43h3v2h-3zM24 39h3v6h-3zM28 41h4v4h-4zM35 34h3v11h-3zM39 35h3v10h-3z" fill="#333" stroke="#000" strokeDasharray="2 1" />
      <path d="M15 38v3M25 36v4M30 38v3M36 31v4M41 31v4" stroke="#000" />
      <path d="M23 49.500h8M58 24v1.500" stroke="#999" />
      <path d="M56 39h4v4h-4zM66 37h5v6h-5zM76 32h4v11h-4z" fill="#ee4a55" />
      <path d="M60 41h4v2h-4zM71 38h4v5h-4zM80 31h5v12h-5z" fill="#25a877" />
      <path d="M50 49.500h40" stroke="#ddd" />
    </svg>
  );
}

function ThumbTwo() {
  return (
    <svg width="96" height="72" viewBox="0 0 428 321" preserveAspectRatio="none" fill="none" className="border border-[#56688a]" aria-hidden="true">
      <rect width="428" height="321" fill="url(#slideBg)" />
      <g transform="translate(158 264)">
        <Plot />
        <path d="M0-140V0M-10 0h222" stroke="#f0d020" strokeWidth="6" />
        {BARS.map((bar) => (
          <path key={bar.x} d={`M${bar.x + 4} ${-bar.up}h20m-10 0v${bar.up - bar.down}`} stroke="#fff" strokeWidth="5" />
        ))}
        <path d="M32-134h38M32-118h90M80 32h52" stroke="#fff" strokeWidth="7" strokeDasharray="9 3" />
        <path d="M-32-105v70" stroke="#fff" strokeWidth="8" strokeDasharray="9 3" />
        <path d="M-12-138v142" stroke="#fff" strokeWidth="5" strokeDasharray="5 30" />
      </g>
    </svg>
  );
}

function SlideList() {
  return (
    <aside className="flex w-[125px] shrink-0 flex-col border-r border-[#8ba0c0] bg-linear-to-b from-[#b9cbe4] to-[#8aa2c6]">
      <div className="flex h-[18px] text-[#3f4b62]">
        <button type="button" aria-label="Slides" className="flex w-[51px] items-center bg-[#c7d9ee] pl-[5px]">
          <Svg w={9} h={8}><path d="M.5.5h8v7h-8z" fill="#fff" stroke="#6c7a94" /></Svg>
        </button>
        <button type="button" aria-label="Outline" className="flex w-[54px] items-center border-x border-b border-[#8ba0c0] bg-[#a6bad6] pl-[6px]">
          <Svg w={11} h={9}><path d="M0 1h9M2 3.5h8M2 6h8M0 8.5h9" stroke="#64728c" /></Svg>
        </button>
        <button type="button" aria-label="Close pane" className="flex flex-1 items-center justify-center border-b border-[#8ba0c0] bg-[#a6bad6]">
          <Svg w={8} h={8}><path d="M1 1l6 6M7 1L1 7" stroke="#4a566d" strokeWidth="1.7" /></Svg>
        </button>
      </div>
      <ol className="flex flex-col gap-[4px] pt-1 pr-1 pl-[2px] text-[10px] font-bold text-[#2f3b52]">
        <li className="flex h-[80px] items-center">
          <span className="w-[18px] self-start pt-1 text-center">1</span>
          <ThumbOne />
        </li>
        <li className="flex h-[80px] items-center border border-[#e9d27b] bg-linear-to-r from-[#fbd65f] to-[#fdf0b8]">
          <span className="w-[17px] self-start pt-1 text-center">2</span>
          <ThumbTwo />
        </li>
      </ol>
    </aside>
  );
}

function EditScrollbar() {
  return (
    <div className="flex w-[13px] shrink-0 flex-col items-center bg-[#b2cade]">
      <Svg w={7} h={14}><path d="M0 9l3.5-4L7 9z" fill="#4c6380" /></Svg>
      <div className="h-[140px] shrink" />
      <div className="flex w-full flex-1 items-center justify-center border border-[#7b93b3] bg-linear-to-r from-[#b9d0ea] to-[#95b6d2]">
        <Svg w={7} h={6}><path d="M0 .5h7M0 3h7M0 5.5h7" stroke="#6f87a8" /></Svg>
      </div>
      <Svg w={7} h={14}><path d="M0 5l3.5 4L7 5z" fill="#4c6380" /></Svg>
      <Svg w={7} h={42}>
        <path d="M0 7l3.5-3L7 7zM0 11l3.5-3L7 11zM0 18h7l-3.5 3zM0 22h7l-3.5 3z" fill="#1c2638" />
      </Svg>
    </div>
  );
}

function PptStatus() {
  return (
    <footer className="flex h-[19px] shrink-0 items-center border-t border-[#8ea0bd] bg-linear-to-b from-[#d3dfef] to-[#adbfd9] text-[10px] whitespace-nowrap text-[#46526a]">
      <p className="w-[63px] pl-[6px]">Slide 2 of 2</p>
      <Sep />
      <p className="w-[80px] pl-[7px]">"Office Theme"</p>
      <Sep />
      <Svg w={14} h={14} className="ml-[8px]">
        <path d="M1 6l6-2 5 3v4l-5 2-6-3z" fill="#e9eef6" stroke="#8593ad" />
        <path d="M4 6l3 3 6-7" stroke="#53699a" strokeWidth="1.7" />
      </Svg>
      <p className="px-[12px]">English (U.K.)</p>
      <Sep />
      <div className="flex-1" />
      <Sep />
      <button type="button" aria-label="Normal view" className="ml-1 flex h-4 w-4 items-center justify-center rounded-sm border border-[#d8ac2a] bg-[#fbe57b]">
        <Svg w={11} h={9}><path d="M.5.5h10v8H.5zM5.5 0v9M5.5 5h5" stroke="#5d5540" /></Svg>
      </button>
      <div className="flex w-[45px] items-center justify-between pl-[4px]">
        <Svg w={10} h={10}><path d="M.5.5h3v3h-3zM6 .5h3v3H6zM.5 6h3v3h-3zM6 6h3v3H6z" stroke="#57647d" /></Svg>
        <Svg w={11} h={10}><path d="M.5 1H5l.5 1L6 1h4.500v7H6L5.500 9 5 8H.500zM5.500 2v7" stroke="#57647d" /></Svg>
        <Svg w={10} h={10}><path d="M0 1h10M1.5 1v4h7V1M5 5v3M3 9h4" stroke="#57647d" /></Svg>
      </div>
      <p className="pl-[11px]">52%</p>
      <button type="button" aria-label="Zoom out" className="ml-[6px]">
        <Svg w={13} h={13}><circle cx="6.5" cy="6.5" r="6" fill="#e6edf7" stroke="#62708a" /><path d="M3.5 6.5h6" stroke="#46526a" strokeWidth="1.5" /></Svg>
      </button>
      <input
        type="range"
        aria-label="Zoom"
        defaultValue={24}
        className="mx-[2px] h-3 w-[82px] appearance-none bg-[linear-gradient(#8495b2,#8495b2)] bg-[length:100%_1px] bg-center bg-no-repeat [&::-webkit-slider-thumb]:h-[11px] [&::-webkit-slider-thumb]:w-2 [&::-webkit-slider-thumb]:appearance-none [&::-webkit-slider-thumb]:rounded-b-md [&::-webkit-slider-thumb]:border [&::-webkit-slider-thumb]:border-[#62708a] [&::-webkit-slider-thumb]:bg-[#e9f0f9]"
      />
      <button type="button" aria-label="Zoom in">
        <Svg w={13} h={13}><circle cx="6.5" cy="6.5" r="6" fill="#e6edf7" stroke="#62708a" /><path d="M3.5 6.5h6M6.5 3.5v6" stroke="#46526a" strokeWidth="1.5" /></Svg>
      </button>
      <button type="button" aria-label="Fit slide" className="ml-[8px]">
        <Svg w={13} h={12}><path d="M.5.5h12v11H.5z" fill="#e6edf7" stroke="#8593ad" /><path d="M2 2l3 2.5M11 2L8 4.5M2 10l3-2.500M11 10L8 7.500" stroke="#46526a" strokeWidth="1.5" /></Svg>
      </button>
      <Svg w={9} h={9} className="mr-px ml-[6px] self-end"><path d="M7 1v2M7 4v2M4 4v2M7 7v2M4 7v2M1 7v2" stroke="#7a89a4" strokeWidth="1.5" /></Svg>
    </footer>
  );
}

const TABS = [
  { label: "Insert", width: "w-[51px]" },
  { label: "Design", width: "w-[53px]" },
  { label: "Transitions", width: "w-[74px]" },
  { label: "Animations", width: "w-[72px]" },
  { label: "Slide Show", width: "w-[75px]" },
  { label: "Review", width: "w-[53px]" },
  { label: "View", width: "w-[48px]" },
  { label: "Add-Ins", width: "w-[56px]" },
];

function QuickAccess() {
  return (
    <div className="flex w-[190px] items-center">
      <Svg w={14} h={14}>
        <path d="M1 1h12v12H1z" fill="#fff3ee" stroke="#d2532c" strokeWidth="1.5" />
        <text x="7" y="11" fontSize="11" fontWeight="700" textAnchor="middle" fontFamily="Liberation Sans, sans-serif" fill="#d2431c">P</text>
      </Svg>
      <span className="mx-1 h-3 w-px bg-[#8d8086]" />
      <Svg w={12} h={12} className="ml-[4px]">
        <path d="M.5.5h11v11H.5z" fill="#4e55b5" stroke="#2f3580" />
        <path d="M3 1h6v4H3zM3 7h6v4H3z" fill="#f2f3fb" />
      </Svg>
      <Svg w={14} h={13} className="ml-[6px]">
        <path d="M3 4h10v8H3z" fill="#fdfdfd" stroke="#777" />
        <path d="M3 0v7M0 3.5h7" stroke="#eccc3a" strokeWidth="1.5" />
      </Svg>
      <span className="ml-[3px]"><Caret color="#222" /></span>
      <Svg w={13} h={12} className="ml-[7px]">
        <path d="M2 1v5h5" stroke="#3d65bf" strokeWidth="2" />
        <path d="M2 6c3-5 9-4 9 0 0 3-2 4-4 5" stroke="#3d65bf" strokeWidth="2" />
      </Svg>
      <span className="ml-[4px]"><Caret color="#222" /></span>
      <Svg w={11} h={11} className="ml-[9px]"><circle cx="5.5" cy="5.5" r="4" stroke="#a79daa" strokeWidth="2" strokeDasharray="19 6" /></Svg>
      <Svg w={13} h={12} className="ml-[6px]">
        <path d="M1 1h11v10H1z" fill="#a9b7e4" stroke="#3d478d" />
        <path d="M3 3l7 6M9 2L4 8" stroke="#2d7a46" strokeWidth="1.5" />
      </Svg>
      <Svg w={12} h={13} className="ml-[6px]">
        <path d="M1 1h7l3 3v8H1z" fill="#fff" stroke="#666" />
        <circle cx="7" cy="8" r="2.5" stroke="#555" strokeWidth="1.3" />
      </Svg>
      <Svg w={13} h={13} className="ml-[7px]"><path d="M4 1h8v8H4zM1 4v8h8M6 3h4M6 5h4" fill="#eee" stroke="#777" /></Svg>
      <Svg w={10} h={10} className="ml-[7px]"><path d="M3 2h6" stroke="#222" /><path d="M3 5h6L6 8z" fill="#222" /></Svg>
    </div>
  );
}

function PowerPoint() {
  return (
    <div className="absolute top-[81px] right-[64px] bottom-[79px] left-[57px] flex flex-col overflow-hidden rounded-lg border border-[#221b26] bg-[linear-gradient(to_bottom,#aba1ae_30%,transparent_30%),linear-gradient(to_right,#b0a2a6_21%,#17123a_22%)] pr-[5px] pb-[5px] pl-[6px] shadow-[0_2px_10px_3px_rgba(0,0,0,0.6)]">
      <div className="-mr-[5px] -ml-[6px] flex shrink-0 flex-col bg-linear-to-b from-[#bba5a4] via-[#aca0ae] via-40% to-[#ece9f4] pr-[5px] pl-[6px]">
        <div className="flex h-[21px]">
          <QuickAccess />
          <p className="flex-1 pt-[3px] pl-[106px] text-[10px] leading-[14px] whitespace-pre text-[#1d1a20]">Presentation1  -  Microsoft PowerPoint</p>
          <div className="w-[68px] bg-linear-to-b from-[#c5107a] to-[#d55fa3] pt-1 text-center text-[10px] leading-[14px] font-semibold whitespace-nowrap text-white">Picture Tools</div>
          <div className="flex w-[151px] items-start justify-end">
            <button type="button" aria-label="Minimize" className="flex h-[14px] w-[25px] items-center justify-center rounded-bl border border-t-0 border-[#7d6e76] bg-[#c9b7ba]">
              <span className="mt-1 h-[3px] w-[10px] border border-[#665a62] bg-white" />
            </button>
            <button type="button" aria-label="Maximize" className="flex h-[14px] w-[24px] items-center justify-center border border-t-0 border-l-0 border-[#7d6e76] bg-[#c9b7ba]">
              <Svg w={10} h={9}><path d="M1 1h8v7H1z" stroke="#665a62" fill="#fff" /><path d="M3.5 3.5h3v2h-3z" stroke="#665a62" /></Svg>
            </button>
            <button type="button" aria-label="Close" className="flex h-[14px] w-[39px] items-center justify-center rounded-br border border-t-0 border-l-0 border-[#7c2d22] bg-linear-to-b from-[#e09a85] to-[#c83c20]">
              <Svg w={9} h={8}><path d="M1 .5l7 7M8 .5l-7 7" stroke="#fff" strokeWidth="2" /></Svg>
            </button>
          </div>
        </div>
        <nav className="flex h-[20px] items-center text-[10px] text-[#48485a]">
          <button type="button" className="h-full w-[48px] rounded-t bg-linear-to-b from-[#e8532f] to-[#f0512a] text-white">File</button>
          <button type="button" className="ml-[4px] h-full w-[46px] rounded-t bg-[#f0f5fc] text-[#3b4558]">Home</button>
          {TABS.map((tab) => (
            <button type="button" key={tab.label} className={clsx("h-full whitespace-nowrap", tab.width)}>
              {tab.label}
            </button>
          ))}
          <button type="button" className="h-full w-[68px] border-x border-[#e0b7d3] bg-linear-to-b from-[#d9a1c6] to-[#eee0ef]">Format</button>
          <div className="flex-1" />
          <button type="button" aria-label="Collapse ribbon"><Svg w={8} h={6}><path d="M1 5l3-4 3 4z" fill="#fff" stroke="#5a5a6e" /></Svg></button>
          <button type="button" className="mr-[3px] ml-[9px] h-[13px] w-[13px] rounded-full bg-[#3f7fd2] text-[10px] leading-[13px] font-bold text-white">?</button>
        </nav>
      </div>
      <Ribbon />
      <div className="flex min-h-0 flex-1 bg-[#c7d9ee]">
        <SlideList />
        <div className="flex min-w-0 flex-1 flex-col pl-1">
          <div className="flex min-h-0 flex-1 flex-col border-l border-[#9db0cc] bg-linear-to-b from-[#cadcef] via-[#a5b7d7] via-65% to-[#8aa4c2]">
            <div className="flex h-[24px] shrink-0 items-start justify-center pt-[4px] pr-[13px] pl-[20px]">
              <Ruler />
            </div>
            <div className="flex min-h-0 flex-1">
              <div className="flex w-[22px] shrink-0 items-center bg-[#c5d8ee] pl-[3px]">
                <Ruler vertical />
              </div>
              <div className="flex flex-1 items-center justify-center">
                <Slide />
              </div>
              <EditScrollbar />
            </div>
          </div>
          <div className="h-[5px] shrink-0 border-y border-[#93a7c4] bg-[#d3e2f3]" />
          <div className="flex h-[32px] shrink-0">
            <textarea
              aria-label="Notes"
              defaultValue="Click to add notes"
              className="block h-full flex-1 resize-none overflow-hidden bg-white pt-[4px] pl-2 text-[13px] leading-[18px] text-[#222]"
            />
            <div className="flex w-[13px] flex-col items-center justify-between bg-[#b5cbe2] py-[5px]">
              <Svg w={7} h={4}><path d="M0 4l3.5-4L7 4z" fill="#6f87a8" /></Svg>
              <Svg w={7} h={4}><path d="M0 0h7L3.5 4z" fill="#6f87a8" /></Svg>
            </div>
          </div>
        </div>
      </div>
      <PptStatus />
    </div>
  );
}

export default function App() {
  return (
    <div className="flex h-screen min-h-[600px] bg-black pt-[2px] pr-[172px] pb-[2px] pl-[172px] font-['Open_Sans',sans-serif]">
      <div className="relative flex min-w-0 flex-1 flex-col rounded-t-md border border-[#6fb6cc] bg-[#1b6685] pr-[5px] pb-[5px] pl-[6px]">
        <header className="flex h-[23px] shrink-0 items-start bg-linear-to-r from-[#4f93ac] via-[#17688a] to-[#1a6d8c]">
          <div className="flex flex-1 items-center gap-[6px] pt-[2px] text-[10px] text-[#0c2430]">
            <PrismLogo size={12} />
            <h1 className="whitespace-nowrap">GraphPad Prism - [test.pzf:PPT Exp 2 (inhib)]</h1>
          </div>
          <div className="flex h-[15px] rounded-b border border-t-0 border-[#5fa0b5]">
            <button type="button" aria-label="Minimize" className="flex w-[25px] items-center justify-center border-r border-[#5fa0b5]">
              <span className="mt-1 h-[3px] w-[9px] bg-white" />
            </button>
            <button type="button" aria-label="Maximize" className="flex w-[22px] items-center justify-center border-r border-[#5fa0b5]">
              <span className="h-[7px] w-[9px] border-2 border-white" />
            </button>
            <button type="button" aria-label="Close" className="flex w-[40px] items-center justify-center">
              <Svg w={8} h={8}><path d="M1 .5l6 7M7 .5l-6 7" stroke="#fff" strokeWidth="2" /></Svg>
            </button>
          </div>
        </header>
        <nav className="flex h-[17px] shrink-0 items-center gap-[11px] border-t border-white bg-[#e4e4f2] pl-[7px] text-[10px] text-[#75798a]">
          <Svg w={13} h={12} className="-mr-[6px]">
            <path d="M2 1v9h9M5 8l5-5v5" stroke="#4b5875" />
            <path d="M1 1h3" stroke="#c33" strokeWidth="2" />
          </Svg>
          {PRISM_MENU.map((item) => (
            <button type="button" key={item}>{item}</button>
          ))}
          <div className="ml-auto flex h-[15px] text-[#7d8496]">
            {["M2 6.5h5", "M1.5 3.5h5v4h-5zM3.5 3V1.5h5v4H7", "M2 2l5 5M7 2L2 7"].map((d) => (
              <span key={d} className="flex w-[17px] items-center justify-center border border-l-0 border-[#c4c8d6] bg-[#f3f4fa]">
                <Svg w={9} h={9}><path d={d} stroke="#7d8496" /></Svg>
              </span>
            ))}
          </div>
        </nav>
        <PrismRibbon />
        <div className="flex min-h-0 flex-1 bg-[#f3f4f9]">
          <div className="w-[226px] shrink-0 pt-1 pr-[4px] pb-[3px] pl-px">
            <div className="h-full border border-[#b4bac6] bg-white">
              <Tree />
            </div>
          </div>
          <div className="flex min-w-0 flex-1 flex-col pt-px">
            <div className="flex-1 bg-[#00007f]" />
            <div className="flex h-[15px] items-center bg-[#efefef]">
              <span className="w-[107px] pl-[5px]"><Svg w={4} h={6}><path d="M4 0v6L0 3z" fill="#333" /></Svg></span>
              <span className="flex h-[13px] flex-1 items-center justify-center border border-[#a9a9a9] bg-linear-to-b from-[#f2f2f2] to-[#cfcfcf]">
                <Svg w={7} h={6}><path d="M1 0v6M3.5 0v6M6 0v6" stroke="#666" /></Svg>
              </span>
              <span className="flex w-[120px] justify-end pr-[6px]"><Svg w={4} h={6}><path d="M0 0v6l4-3z" fill="#333" /></Svg></span>
            </div>
          </div>
          <div className="flex w-[14px] shrink-0 flex-col items-center bg-[#efefef] pb-[15px]">
            <Svg w={6} h={16}><path d="M0 12l3-4 3 4z" fill="#444" /></Svg>
            <div className="h-[58px]" />
            <span className="flex w-[13px] flex-1 items-center justify-center border border-[#a9a9a9] bg-linear-to-r from-[#f6f6f6] to-[#cfcfcf]">
              <Svg w={6} h={7}><path d="M0 1h6M0 3.5h6M0 6h6" stroke="#666" /></Svg>
            </span>
            <div className="h-[36px]" />
            <Svg w={6} h={10}><path d="M0 2h6L3 6z" fill="#444" /></Svg>
          </div>
        </div>
        <PrismStatus />
        <PowerPoint />
      </div>
    </div>
  );
}
